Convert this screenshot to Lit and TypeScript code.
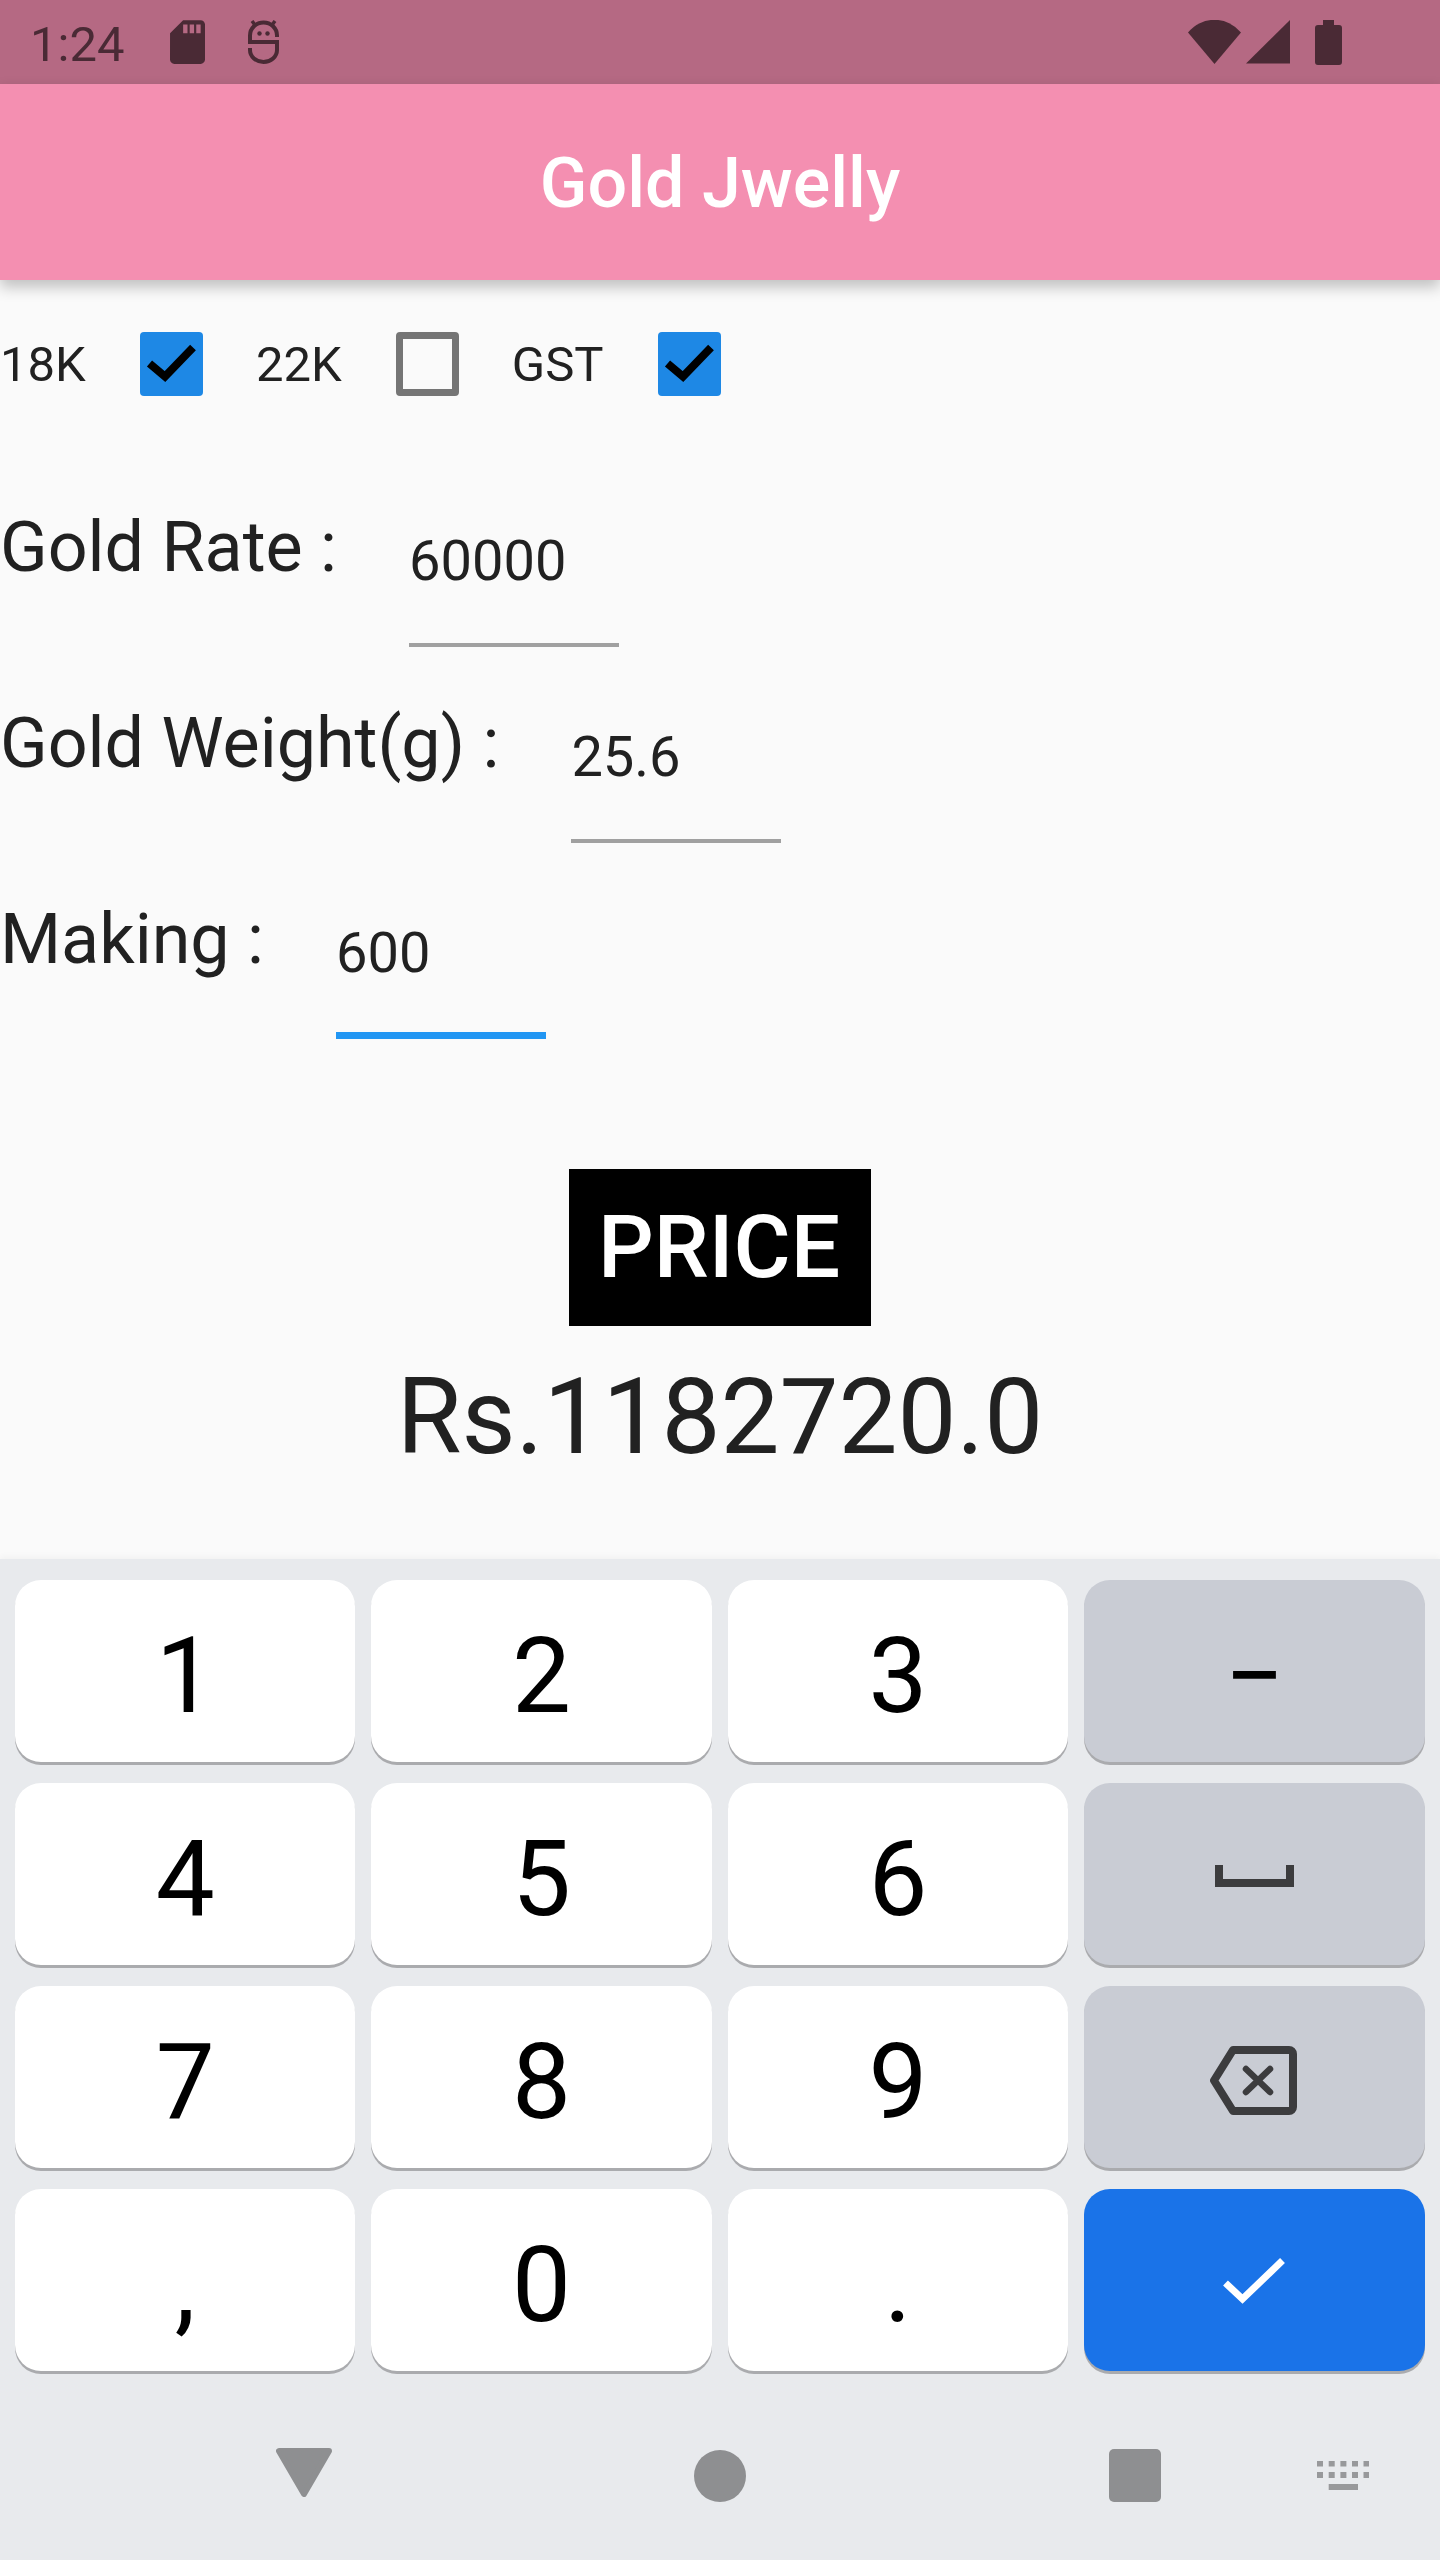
import { css, html, LitElement, svg } from 'lit';
import { customElement } from 'lit/decorators.js';
import { classMap } from 'lit/directives/class-map.js';

const OPTIONS = [
  { label: '18K', checked: true },
  { label: '22K', checked: false },
  { label: 'GST', checked: true },
];

const FIELDS = [
  { label: 'Gold Rate :', value: '60000', focused: false },
  { label: 'Gold Weight(g) :', value: '25.6', focused: false },
  { label: 'Making :', value: '600', focused: true },
];

const KEYS = ['1', '2', '3', '−', '4', '5', '6', 'space', '7', '8', '9', 'back', ',', '0', '.', 'enter'];

const keyboardDots = [0, 11.7, 23.4, 35, 46.5].flatMap((x) => [
  svg`<rect x=${x} y="0" width="6" height="5.5" />`,
  svg`<rect x=${x} y="11" width="6" height="6" />`,
]);

@customElement('app-root')
export class AppRoot extends LitElement {
  static styles = css`
    :host {
      display: flex;
      flex-direction: column;
      width: 1440px;
      height: 2560px;
      overflow: hidden;
      background: #fafafa;
      color: #212121;
      font-family: Roboto, sans-serif;
    }

    svg {
      display: block;
      flex: none;
    }

    .status {
      flex: none;
      display: flex;
      align-items: center;
      height: 84px;
      padding: 0 98px 0 30px;
      background: #b56983;
      color: #4a2a35;
      fill: #4a2a35;
      font-size: 49px;
    }

    .time {
      padding-top: 4px;
      margin-right: 46px;
    }

    .sd {
      margin-right: 43px;
    }

    .spacer {
      flex: 1;
    }

    .wifi {
      margin-right: 5px;
    }

    .signal {
      margin-right: 25px;
    }

    .appbar {
      flex: none;
      position: relative;
      z-index: 1;
      box-sizing: border-box;
      height: 196px;
      padding-top: 2px;
      display: flex;
      align-items: center;
      justify-content: center;
      background: #f48fb1;
      box-shadow: 0 7px 14px rgba(0, 0, 0, 0.24);
      color: #fff;
      font-size: 70px;
      font-weight: 500;
    }

    main {
      flex: 1;
      display: flex;
      flex-direction: column;
    }

    .options {
      display: flex;
      align-items: center;
      height: 168px;
      font-size: 49px;
    }

    .option-label {
      padding-right: 2.1px;
    }

    .check-cell {
      width: 168px;
      display: flex;
      justify-content: center;
    }

    .box {
      box-sizing: border-box;
      width: 63px;
      height: 64px;
      border-radius: 4px;
      border: 7px solid #757575;
    }

    .box.checked {
      border: none;
      background: #1e88e5;
    }

    .fields {
      margin-top: 28px;
    }

    .field {
      display: flex;
      align-items: flex-start;
      gap: 72px;
      height: 196px;
    }

    .field-label {
      margin-top: 30px;
      font-size: 70px;
    }

    .input {
      box-sizing: border-box;
      width: 210px;
      height: 120px;
      margin-top: 51px;
      padding-top: 1px;
      border-bottom: 4px solid #a0a0a0;
      font-size: 56px;
    }

    .input.focused {
      border-bottom: 7px solid #2196f3;
    }

    .result {
      display: flex;
      flex-direction: column;
      align-items: center;
      margin-top: 105px;
    }

    .price {
      padding: 28px 31px 28px 29px;
      background: #000;
      color: #fff;
      font-size: 87.5px;
      line-height: 101px;
      font-weight: 500;
    }

    .amount {
      margin-top: 30px;
      font-size: 105px;
    }

    .keyboard {
      flex: none;
      height: 1001px;
      box-sizing: border-box;
      padding-top: 21px;
      background: #e8eaed;
      box-shadow: 0 -3px 6px rgba(0, 0, 0, 0.03);
    }

    .keys {
      display: grid;
      grid-template-columns: repeat(4, 1fr);
      grid-auto-rows: 182px;
      gap: 21px 16px;
      padding: 0 15.5px 0 15px;
    }

    .key {
      display: flex;
      align-items: center;
      justify-content: center;
      padding-top: 10px;
      box-sizing: border-box;
      border-radius: 26px;
      background: #fff;
      box-shadow: 0 3px 0 #aaabae;
      color: #000;
      font-size: 105px;
      line-height: 1;
    }

    .key.action {
      background: #c9ccd4;
    }

    .key.enter {
      background: #1a73e8;
      padding-top: 2px;
    }

    .key.space {
      padding-top: 4px;
    }

    .key.back {
      padding: 7px 3px 0 0;
    }

    .nav {
      display: flex;
      align-items: center;
      height: 189px;
      padding: 20px 0 0 276px;
      box-sizing: border-box;
      fill: #8e8f91;
    }

    .nav-back {
      margin: -6px 362px 0 0;
    }

    .nav-home {
      width: 52px;
      height: 52px;
      border-radius: 50%;
      background: #8e8f91;
      margin-right: 363px;
    }

    .nav-recent {
      width: 52px;
      height: 53px;
      border-radius: 5px;
      background: #8e8f91;
      margin-right: 156px;
    }

    .nav-keyboard {
      fill: #98999b;
    }
  `;

  private renderKey(key: string) {
    if (key === 'space') {
      return html`<div class="key action space">
        <svg width="79" height="22" viewBox="0 0 79 22" fill="none" stroke="#3c3c3e" stroke-width="8">
          <path d="M4 0V18H75V0" />
        </svg>
      </div>`;
    }
    if (key === 'back') {
      return html`<div class="key action back">
        <svg width="88" height="69" viewBox="0 0 88 69" fill="none" stroke="#3c3c3e" stroke-width="8" stroke-linejoin="round">
          <path d="M5 34.5L24 4H80a4 4 0 0 1 4 4V61a4 4 0 0 1-4 4H24Z" />
          <path d="M37 23L61 46M61 23L37 46" stroke-width="6.5" stroke-linecap="round" />
        </svg>
      </div>`;
    }
    if (key === 'enter') {
      return html`<div class="key enter">
        <svg width="62" height="46" viewBox="0 0 62 46" fill="none" stroke="#fff" stroke-width="7">
          <path d="M2.5 25L19.5 41L59.5 2.5" />
        </svg>
      </div>`;
    }
    return html`<div class=${classMap({ key: true, action: key === '−' })}>${key}</div>`;
  }

  render() {
    return html`
      <div class="status">
        <span class="time">1:24</span>
        <svg class="sd" width="35" height="44" viewBox="4 2 16 20">
          <path d="M18 2h-8L4.02 8 4 20c0 1.1.9 2 2 2h12c1.1 0 2-.9 2-2V4c0-1.1-.9-2-2-2zm-6 6h-2V4h2v4zm3 0h-2V4h2v4zm3 0h-2V4h2v4z" />
        </svg>
        <svg width="31" height="44" viewBox="0 0 31 44" fill="none" stroke="#4a2a35" stroke-width="4">
          <path d="M29 17V15.5a13.5 13 0 0 0-27 0V22H29V30a13.5 12 0 0 1-27 0V28" />
          <path d="M4 1L7 5M27 1L24 5" stroke-width="3.5" />
          <circle cx="11.5" cy="13.5" r="2.2" fill="#4a2a35" stroke="none" />
          <circle cx="19.5" cy="13.5" r="2.2" fill="#4a2a35" stroke="none" />
        </svg>
        <span class="spacer"></span>
        <svg class="wifi" width="53" height="44" viewBox="0 0 53 44">
          <path d="M0 12.5A34 34 0 0 1 53 12.5L26.5 44Z" />
        </svg>
        <svg class="signal" width="44" height="44" viewBox="0 0 44 44">
          <path d="M44 0V43.5H0Z" />
        </svg>
        <svg width="27" height="45" viewBox="0 0 27 45">
          <path d="M8 0H19V5H24a3 3 0 0 1 3 3V42a3 3 0 0 1-3 3H3a3 3 0 0 1-3-3V8a3 3 0 0 1 3-3H8Z" />
        </svg>
      </div>
      <header class="appbar">Gold Jwelly</header>
      <main>
        <div class="options">
          ${OPTIONS.map(
            (o) => html`<span class="option-label">${o.label}</span>
              <div class="check-cell">
                <div class=${classMap({ box: true, checked: o.checked })}>
                  ${o.checked
                    ? html`<svg width="63" height="64" viewBox="0 0 63 64" fill="none" stroke="#000" stroke-width="8">
                        <path d="M9.5 31.5L25 44.5L53 15.5" />
                      </svg>`
                    : ''}
                </div>
              </div>`,
          )}
        </div>
        <div class="fields">
          ${FIELDS.map(
            (f) => html`<div class="field">
              <span class="field-label">${f.label}</span>
              <div class=${classMap({ input: true, focused: f.focused })}>${f.value}</div>
            </div>`,
          )}
        </div>
        <div class="result">
          <div class="price">PRICE</div>
          <div class="amount">Rs.1182720.0</div>
        </div>
      </main>
      <div class="keyboard">
        <div class="keys">${KEYS.map((k) => this.renderKey(k))}</div>
        <div class="nav">
          <svg class="nav-back" width="56" height="49" viewBox="0 0 56 49" stroke="#8e8f91" stroke-width="6" stroke-linejoin="round">
            <path d="M3 3H53L28 46Z" />
          </svg>
          <div class="nav-home"></div>
          <div class="nav-recent"></div>
          <svg class="nav-keyboard" width="52" height="29" viewBox="0 0 52 29">
            ${keyboardDots}
            <rect x="11.7" y="23" width="29.3" height="6" />
          </svg>
        </div>
      </div>
    `;
  }
}
